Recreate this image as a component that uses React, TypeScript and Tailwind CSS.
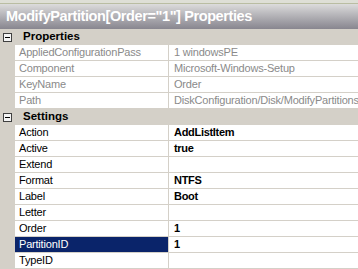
import React from "react";

type Row = { name: string; value: string; readOnly?: boolean; selected?: boolean };

const propsRows: Row[] = [
  { name: "AppliedConfigurationPass", value: "1 windowsPE", readOnly: true },
  { name: "Component", value: "Microsoft-Windows-Setup", readOnly: true },
  { name: "KeyName", value: "Order", readOnly: true },
  { name: "Path", value: "DiskConfiguration/Disk/ModifyPartitions/ModifyPartition", readOnly: true },
];

const settingsRows: Row[] = [
  { name: "Action", value: "AddListItem" },
  { name: "Active", value: "true" },
  { name: "Extend", value: "" },
  { name: "Format", value: "NTFS" },
  { name: "Label", value: "Boot" },
  { name: "Letter", value: "" },
  { name: "Order", value: "1" },
  { name: "PartitionID", value: "1", selected: true },
  { name: "TypeID", value: "" },
];

function Category({ label }: { label: string }) {
  return (
    <div className="flex h-[16px] items-center bg-[#d4d0c8]">
      <div className="ml-[3px] flex h-[9px] w-[9px] items-center justify-center border border-[#404040] bg-[#f4f4f4]">
        <div className="h-[1px] w-[5px] bg-black" />
      </div>
      <span className="ml-[11px] text-[11.5px] font-bold leading-none text-black">{label}</span>
    </div>
  );
}

function PropRow({ row }: { row: Row }) {
  return (
    <div className="flex h-[16px] bg-[#d4d0c8]">
      <div className="w-[15px] shrink-0" />
      <div
        className={
          "flex w-[154px] shrink-0 items-center border-b border-r border-[#d4d0c8] pl-[4px] " +
          (row.selected ? "bg-[#0a246a] text-white" : "bg-white " + (row.readOnly ? "text-[#8a8a8a]" : "text-black"))
        }
      >
        <span className="whitespace-nowrap text-[11px] leading-none tracking-[-0.2px]">{row.name}</span>
      </div>
      <div className="flex min-w-0 flex-1 items-center overflow-hidden border-b border-[#d4d0c8] bg-white pl-[5px]">
        <span
          className={
            "whitespace-nowrap text-[11px] leading-none " +
            (row.readOnly ? "text-[#8a8a8a] tracking-[-0.2px]" : "font-bold text-black tracking-[-0.3px]")
          }
        >
          {row.value}
        </span>
      </div>
    </div>
  );
}

export default function App() {
  return (
    <div
      className="h-[269px] w-[358px] overflow-hidden bg-white"
      style={{ fontFamily: '"Liberation Sans", Arial, sans-serif' }}
    >
      <div className="h-[3px] bg-[#dedfd6]" />
      <div className="h-[1px] bg-[#b9bda2]" />
      <div className="flex h-[25px] items-center bg-gradient-to-b from-[#dcdcdc] to-[#88868f] pl-[6px]">
        <span className="whitespace-nowrap text-[14.5px] font-bold leading-none tracking-[-0.4px] text-white">
          ModifyPartition[Order="1"] Properties
        </span>
      </div>
      <Category label="Properties" />
      {propsRows.map((r) => (
        <PropRow key={r.name} row={r} />
      ))}
      <Category label="Settings" />
      {settingsRows.map((r) => (
        <PropRow key={r.name} row={r} />
      ))}
    </div>
  );
}
